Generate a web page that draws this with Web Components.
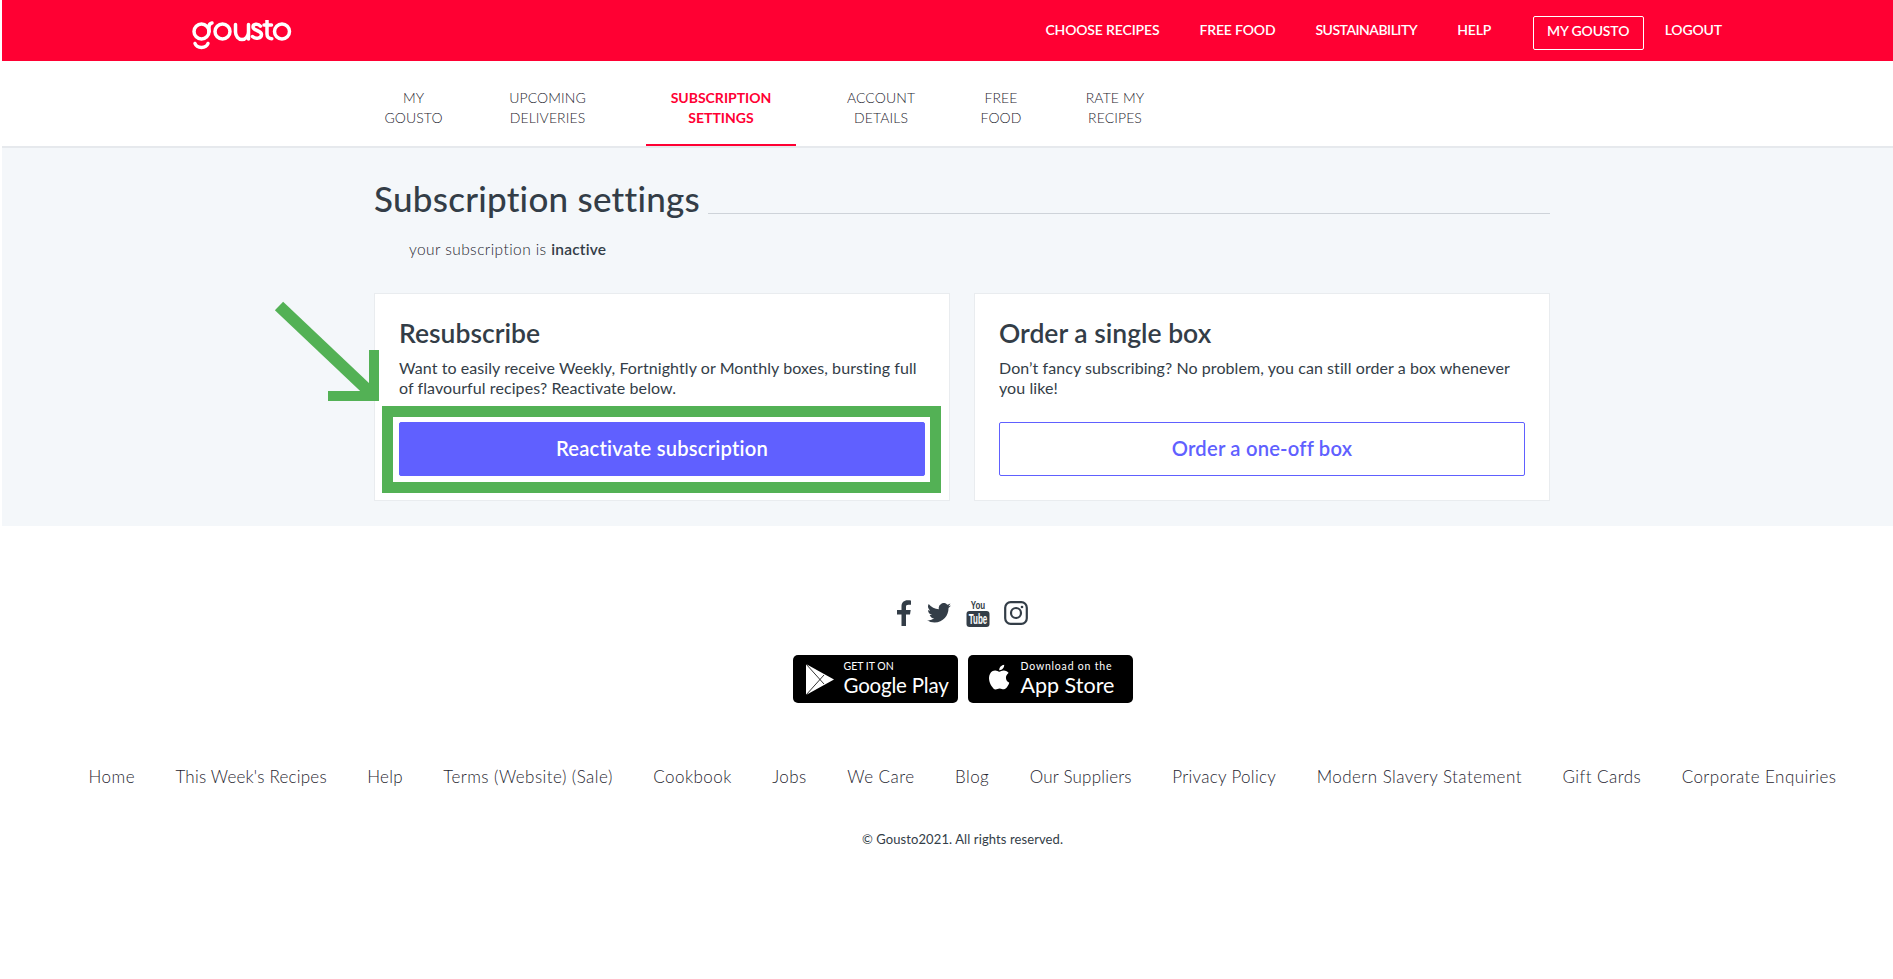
<!DOCTYPE html>
<html lang="en"><head><meta charset="utf-8"><title>Gousto</title>
<style>
html,body{margin:0;padding:0;background:#fff}
body{padding-left:2px;height:979px;overflow:hidden;box-sizing:border-box;font-family:Lato,"Liberation Sans",sans-serif;color:#333d47;position:relative}
</style></head><body>
<gousto-header></gousto-header>
<gousto-subnav></gousto-subnav>
<gousto-settings></gousto-settings>
<gousto-footer></gousto-footer>
<script>
function def(name,html){customElements.define(name,class extends HTMLElement{constructor(){super();this.attachShadow({mode:'open'}).innerHTML=html}})}
def('gousto-logo',`<style>:host{display:block;width:100px;height:30px;margin-top:9px}svg{display:block}</style>
<svg width="100" height="30" viewBox="0 0 100 30" role="img" aria-label="gousto" fill="none" stroke="#fff" stroke-width="3.500" stroke-linecap="round">
<circle cx="9.500" cy="11.500" r="7.500"/><path d="M17 11.500V7Q17 3.500 20 3M3 23.500a6.800 5.500 0 0 0 13 0"/>
<circle cx="30.500" cy="11.500" r="7.500"/><path d="M43.500 4.500V12a6.500 7.500 0 0 0 13 0V4.500M56.500 12V19"/>
<path d="M68.500 6.200C66.500 3.500 61 3.500 61 7c0 4 8.500 3 8.500 7.500 0 4-6 5-9 2"/>
<path d="M75 0.500V14c0 3 2 4.800 4.800 4.800M72 5H79.500"/>
<circle cx="90" cy="11.500" r="7.500"/></svg>`);
def('top-link',`<style>:host{display:inline-block;font:600 14px/20px Lato,sans-serif;color:#fff;white-space:nowrap;letter-spacing:var(--ls,-.15px)}</style><slot></slot>`);
def('gousto-header',`<style>
:host{display:flex;align-items:center;height:61px;background:#ff0033;padding-left:190px;box-sizing:border-box}
nav{display:flex;align-items:center;margin-left:auto;margin-right:171px;margin-top:-2px;gap:40px}
nav .box{border:1px solid #fff;border-radius:2px;height:34px;width:111px;box-sizing:border-box;display:flex;align-items:center;justify-content:center;margin:0 -19px 0 1.500px;position:relative;top:3px;padding-bottom:3px}
</style><gousto-logo></gousto-logo>
<nav><top-link>CHOOSE RECIPES</top-link><top-link>FREE FOOD</top-link><top-link style="--ls:-.5px">SUSTAINABILITY</top-link><top-link>HELP</top-link><div class="box"><top-link>MY GOUSTO</top-link></div><top-link>LOGOUT</top-link></nav>`);
def('sub-tab',`<style>
:host{display:flex;align-items:center;justify-content:center;text-align:center;box-sizing:border-box;height:85px;font:300 14px/20px Lato,sans-serif;letter-spacing:.1px;color:#1f2630;padding:11px 0 2px;width:var(--w);flex:none}
:host([active]){color:#ff0033;font-weight:700;letter-spacing:0;border-bottom:2px solid #ff0033;padding-bottom:0}
</style><div><slot></slot></div>`);
def('gousto-subnav',`<style>
:host{display:flex;height:87px;box-sizing:border-box;border-bottom:2px solid #e6e9ed;padding-left:364px}
</style>
<sub-tab style="--w:95px">MY<br>GOUSTO</sub-tab>
<sub-tab style="--w:173px">UPCOMING<br>DELIVERIES</sub-tab>
<sub-tab style="--w:12px"></sub-tab>
<sub-tab active style="--w:150px">SUBSCRIPTION<br>SETTINGS</sub-tab>
<sub-tab style="--w:170px">ACCOUNT<br>DETAILS</sub-tab>
<sub-tab style="--w:70px">FREE<br>FOOD</sub-tab>
<sub-tab style="--w:158px">RATE MY<br>RECIPES</sub-tab>`);
def('gousto-card',`<style>
:host{display:block;background:#fff;border:1px solid #e9ecef;box-sizing:border-box;width:576px;height:208px;padding:22px 24px}
h2{margin:0 0 8px;font:600 26.500px/34px Lato,sans-serif;color:#333d47}
p{margin:0 0 24px;font:400 16px/20px Lato,sans-serif;letter-spacing:.08px;color:#333d47;height:40px}
</style><h2><slot name="title"></slot></h2><p><slot name="text"></slot></p><slot name="action"></slot>`);
def('gousto-button',`<style>
:host{display:flex;align-items:center;justify-content:center;height:54px;box-sizing:border-box;border-radius:2px;font:600 20.200px/24px Lato,sans-serif;letter-spacing:.2px;border:1px solid #6060ff;color:#6060ff;background:#fff;padding-bottom:2px}
:host([primary]){background:#6060ff;color:#fff}
</style><slot></slot>`);
def('gousto-settings',`<style>
:host{display:block;position:relative;height:378px;background:#f4f7fa;box-sizing:border-box;padding:30px 343px 0 372px}
.head{display:flex;align-items:flex-end;height:40px}
h1{margin:0;font:500 35px/40px Lato,sans-serif;letter-spacing:.25px;color:#333d47;white-space:nowrap}
.rule{flex:1;height:1px;background:#ced3d9;margin:0 0 0 8px;position:relative;top:-4px}
.sub{margin:20px 0 0 35px;font:300 15.500px/22px Lato,sans-serif;color:#1f2630;letter-spacing:.42px}
.sub b{font-weight:600;letter-spacing:.2px;color:#333d47}
.cards{display:flex;gap:24px;margin-top:33px}
.hl{position:absolute;left:380px;top:258px;width:559px;height:87px;box-sizing:border-box;border:11px solid #53b155}
svg{position:absolute;left:270px;top:150px}
</style>
<div class="head"><h1>Subscription settings</h1><div class="rule"></div></div>
<div class="sub">your subscription is <b>inactive</b></div>
<div class="cards">
<gousto-card><span slot="title">Resubscribe</span><span slot="text">Want to easily receive Weekly, Fortnightly or Monthly boxes, bursting full of flavourful recipes? Reactivate below.</span><gousto-button primary slot="action">Reactivate subscription</gousto-button></gousto-card>
<gousto-card><span slot="title">Order a single box</span><span slot="text">Don’t fancy subscribing? No problem, you can still order a box whenever you like!</span><gousto-button slot="action">Order a one-off box</gousto-button></gousto-card>
</div>
<div class="hl"></div>
<svg width="112" height="106" viewBox="0 0 112 106" fill="none" stroke="#53b155" stroke-width="10"><path stroke-width="12" d="M7 8L101 97"/><path d="M102 52V98H56"/></svg>`);
def('social-icons',`<style>:host{display:flex;justify-content:center;align-items:center;height:30px}
svg{display:block;fill:#333d47}text{font-family:"Liberation Sans",sans-serif;font-weight:700}</style>
<svg width="14" height="26" viewBox="0 0 14 26" style="margin-right:16px"><path d="M9 26V14.500h4l.7-4.600H9V7c0-1.400.5-2.300 2.400-2.300H14V.5C13.500.4 12.100 .3 10.600 .3 7 .3 4.500 2.500 4.500 6.500v3.400H0v4.600h4.500V26z"/></svg>
<svg width="24" height="20" viewBox="0 0 24 20" style="margin-right:15px"><path d="M24 2.400c-.9.400-1.800.700-2.800.800 1-.6 1.800-1.600 2.200-2.700-1 .6-2 1-3.100 1.200A4.900 4.900 0 0 0 11.900 6.200 14 14 0 0 1 1.700.9a4.900 4.900 0 0 0 1.500 6.600c-.8 0-1.600-.2-2.200-.6 0 2.400 1.700 4.400 3.900 4.900-.7.200-1.500.2-2.200.1.600 2 2.400 3.400 4.600 3.400A9.900 9.900 0 0 1 0 17.300 14 14 0 0 0 7.500 19.500c9.100 0 14.300-7.700 14-14.600 1-.7 1.800-1.500 2.500-2.500z"/></svg>
<svg width="24" height="28" viewBox="0 0 24 28" style="margin-right:14px"><text transform="translate(12 9.500) scale(.8 1.150)" font-size="10" text-anchor="middle">You</text><rect x=".5" y="12" width="23" height="16" rx="3"/><text transform="translate(12 24.500) scale(.8 1.400)" font-size="10" fill="#fff" text-anchor="middle">Tube</text></svg>
<svg width="24" height="24" viewBox="0 0 24 24" style="fill:none;stroke:#333d47"><rect x="1.200" y="1.200" width="21.600" height="21.600" rx="5.500" stroke-width="2.200"/><circle cx="12" cy="12" r="5" stroke-width="2.200"/><circle cx="18" cy="6" r="1.300" style="fill:#333d47;stroke:none"/></svg>`);
def('store-badge',`<style>:host{display:flex;align-items:center;width:165px;height:48px;background:#000;border-radius:5px;color:#fff;box-sizing:border-box;flex:none;padding-left:var(--pl);gap:var(--g)}
.col{display:flex;flex-direction:column;white-space:nowrap;font-family:Lato,sans-serif;height:40px}
.l1{height:14px;font:400 var(--s1)/14px Lato,sans-serif;letter-spacing:var(--ls1)}
.l2{height:26px;font:400 var(--s2)/24px Lato,sans-serif;letter-spacing:var(--ls2)}
</style><slot name="icon"></slot><div class="col"><div class="l1"><slot name="small"></slot></div><div class="l2"><slot name="big"></slot></div></div>`);
def('gousto-footer',`<style>
:host{display:block}
.s{padding:72px 0 0 30px}
.b{display:flex;justify-content:center;gap:10px;margin-top:27px;padding-left:30px}
svg{display:block;flex:none}
.links{display:flex;gap:40.500px;justify-content:center;margin-top:62px;font:300 17px/24px Lato,sans-serif;letter-spacing:.45px;color:#1f2630;padding-left:30px}
.c{text-align:center;font:400 13px/16px Lato,sans-serif;letter-spacing:.1px;color:#333d47;margin-top:42px;padding-left:30px}
</style>
<div class="s"><social-icons></social-icons></div>
<div class="b">
<store-badge style="--pl:13px;--g:10px;--s1:10.500px;--s2:20.500px;--ls1:0;--ls2:-.2px">
<svg slot="icon" width="28" height="31" viewBox="0 0 28 31"><path d="M0 0L28 15.500L0 31Z" fill="#fff"/><path d="M0 0L18 20M0 31L18 11" fill="none" stroke="#000" stroke-width=".8"/></svg>
<span slot="small">GET IT ON</span><span slot="big">Google Play</span>
</store-badge>
<store-badge style="--pl:18px;--g:10px;--s1:10.500px;--s2:21.500px;--ls1:.8px;--ls2:0">
<svg slot="icon" width="25" height="28" viewBox="0 0 25 30" style="margin-top:-4px" fill="#fff"><path d="M20.500 15.900c0-3.400 2.800-5 2.900-5.100-1.600-2.300-4-2.600-4.900-2.700-2.100-.2-4 1.200-5.100 1.200s-2.700-1.200-4.400-1.200c-2.300 0-4.400 1.300-5.500 3.300-2.400 4.100-.6 10.200 1.700 13.500 1.100 1.600 2.500 3.500 4.200 3.400 1.700-.1 2.300-1.100 4.400-1.100s2.600 1.100 4.400 1 2.900-1.600 4-3.300c1.300-1.900 1.800-3.700 1.800-3.800-.1 0-3.500-1.300-3.500-5.200zM17.200 6c.9-1.100 1.500-2.600 1.400-4.200-1.300.1-2.900.9-3.900 2-.8 1-1.600 2.500-1.400 4 1.500.1 3-.7 3.900-1.800z"/></svg>
<span slot="small">Download on the</span><span slot="big">App Store</span>
</store-badge>
</div>
<div class="links"><span>Home</span><span style="letter-spacing:.2px">This Week's Recipes</span><span style="letter-spacing:.2px">Help</span><span>Terms (Website) (Sale)</span><span>Cookbook</span><span>Jobs</span><span>We Care</span><span>Blog</span><span style="letter-spacing:.2px">Our Suppliers</span><span style="letter-spacing:.3px">Privacy Policy</span><span>Modern Slavery Statement</span><span>Gift Cards</span><span>Corporate Enquiries</span></div>
<div class="c">© Gousto2021. All rights reserved.</div>`);
</script></body></html>
